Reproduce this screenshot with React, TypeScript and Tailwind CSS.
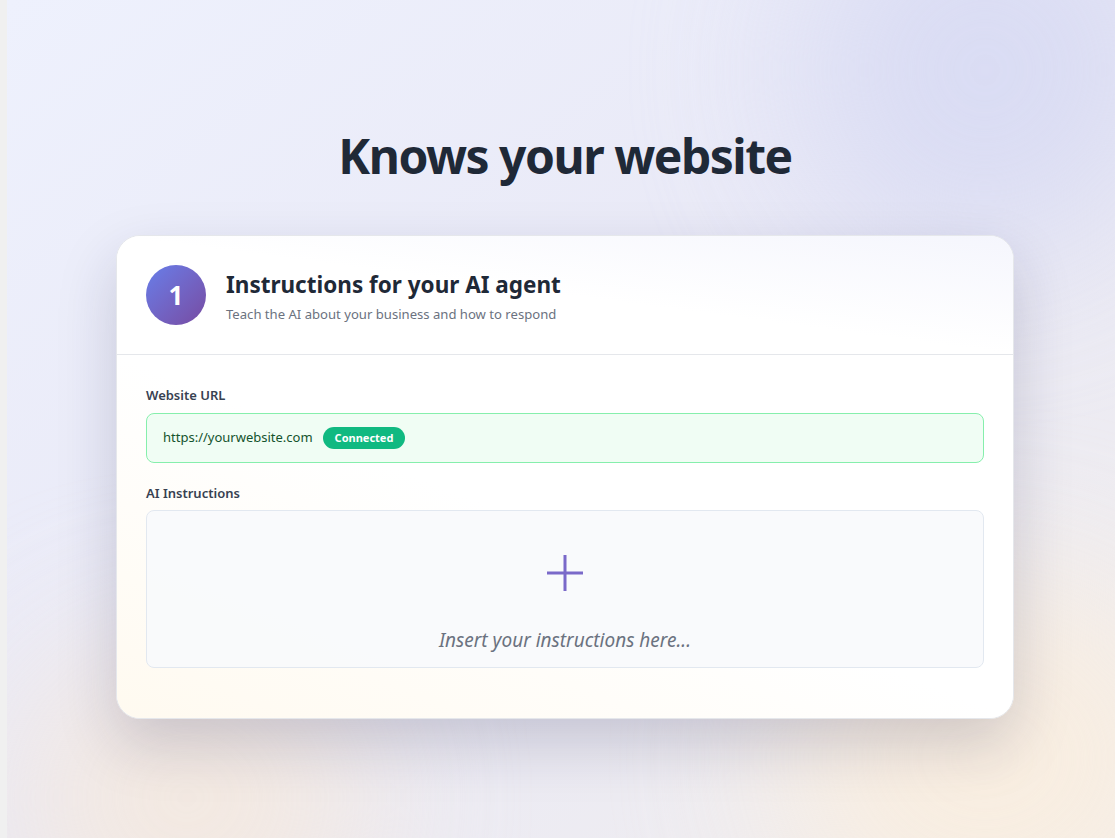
export default function App() {
  return (
    <div
      className="flex min-h-[838px] w-full bg-[#f0f0f0]"
      style={{ fontFamily: '"Noto Sans", "Open Sans", sans-serif' }}
    >
      <div className="w-[7px] shrink-0" />
      <main className="relative flex-1 overflow-hidden bg-gradient-to-br from-[#eef1fd] via-[#e9e9f6] to-[#f1eeee]">
        {/* soft colour blobs behind the card */}
        <div className="pointer-events-none absolute -top-[120px] right-[-60px] h-[380px] w-[380px] rounded-full bg-[#d6d9f3] opacity-80 blur-[80px]" />
        <div className="pointer-events-none absolute bottom-[-120px] left-[0px] h-[320px] w-[360px] rounded-full bg-[#f6e9dc] opacity-80 blur-[80px]" />
        <div className="pointer-events-none absolute bottom-[-100px] right-[-80px] h-[360px] w-[420px] rounded-full bg-[#fbeedd] opacity-80 blur-[80px]" />

        <div className="relative flex flex-col items-center pl-[8px] pt-[124px]">
          <h1 className="text-[48px] font-bold leading-[64px] tracking-[-1.5px] text-[#1f2937]">
            Knows your website
          </h1>

          <section className="mt-[47px] w-[898px] overflow-hidden rounded-3xl border border-[#e5e7eb] bg-white/90 shadow-[0_25px_60px_rgba(30,30,70,0.18)]">
            <header className="flex items-start gap-5 border-b border-[#e5e7eb] bg-gradient-to-bl from-[#f5f6fd] via-white to-white px-[29px] py-[29px]">
              <div className="flex h-[60px] w-[60px] shrink-0 items-center justify-center rounded-full bg-gradient-to-br from-[#667eea] to-[#764ba2] text-[26px] font-bold text-white">
                1
              </div>
              <div className="mt-[5px] flex flex-col">
                <h2 className="text-[22.5px] font-bold leading-[30px] text-[#1f2937]">
                  Instructions for your AI agent
                </h2>
                <p className="mt-[4px] text-[13.1px] leading-[20px] text-[#6b7280]">
                  Teach the AI about your business and how to respond
                </p>
              </div>
            </header>

            <div className="bg-gradient-to-tr from-[#fffaf0] via-white to-white px-[29px] pt-[30px] pb-[50px]">
              <label className="block text-[13px] font-semibold leading-[20px] text-[#374151]">
                Website URL
              </label>
              <div className="mt-2 flex h-[50px] items-center gap-[10px] rounded-lg border border-[#86efac] bg-[#f0fdf4] px-4">
                <span className="text-[13px] text-[#14532d]">https://yourwebsite.com</span>
                <span className="rounded-full bg-[#10b981] px-3 py-[3px] text-[11px] font-bold text-white">
                  Connected
                </span>
              </div>

              <label className="mt-[20px] block text-[13px] font-semibold leading-[20px] text-[#374151]">
                AI Instructions
              </label>
              <div className="mt-[7px] flex h-[158px] flex-col items-center rounded-lg border border-[#e2e8f0] bg-[#f8fafc]/90 pt-[44px]">
                <svg width="36" height="36" viewBox="0 0 36 36" className="text-[#7a69c9]">
                  <path d="M18 0v36M0 18h36" stroke="currentColor" strokeWidth="3" fill="none" />
                </svg>
                <p className="mt-[35px] text-[19px] italic leading-[28px] text-[#6b7280]">
                  Insert your instructions here...
                </p>
              </div>
            </div>
          </section>
        </div>
      </main>
    </div>
  )
}
